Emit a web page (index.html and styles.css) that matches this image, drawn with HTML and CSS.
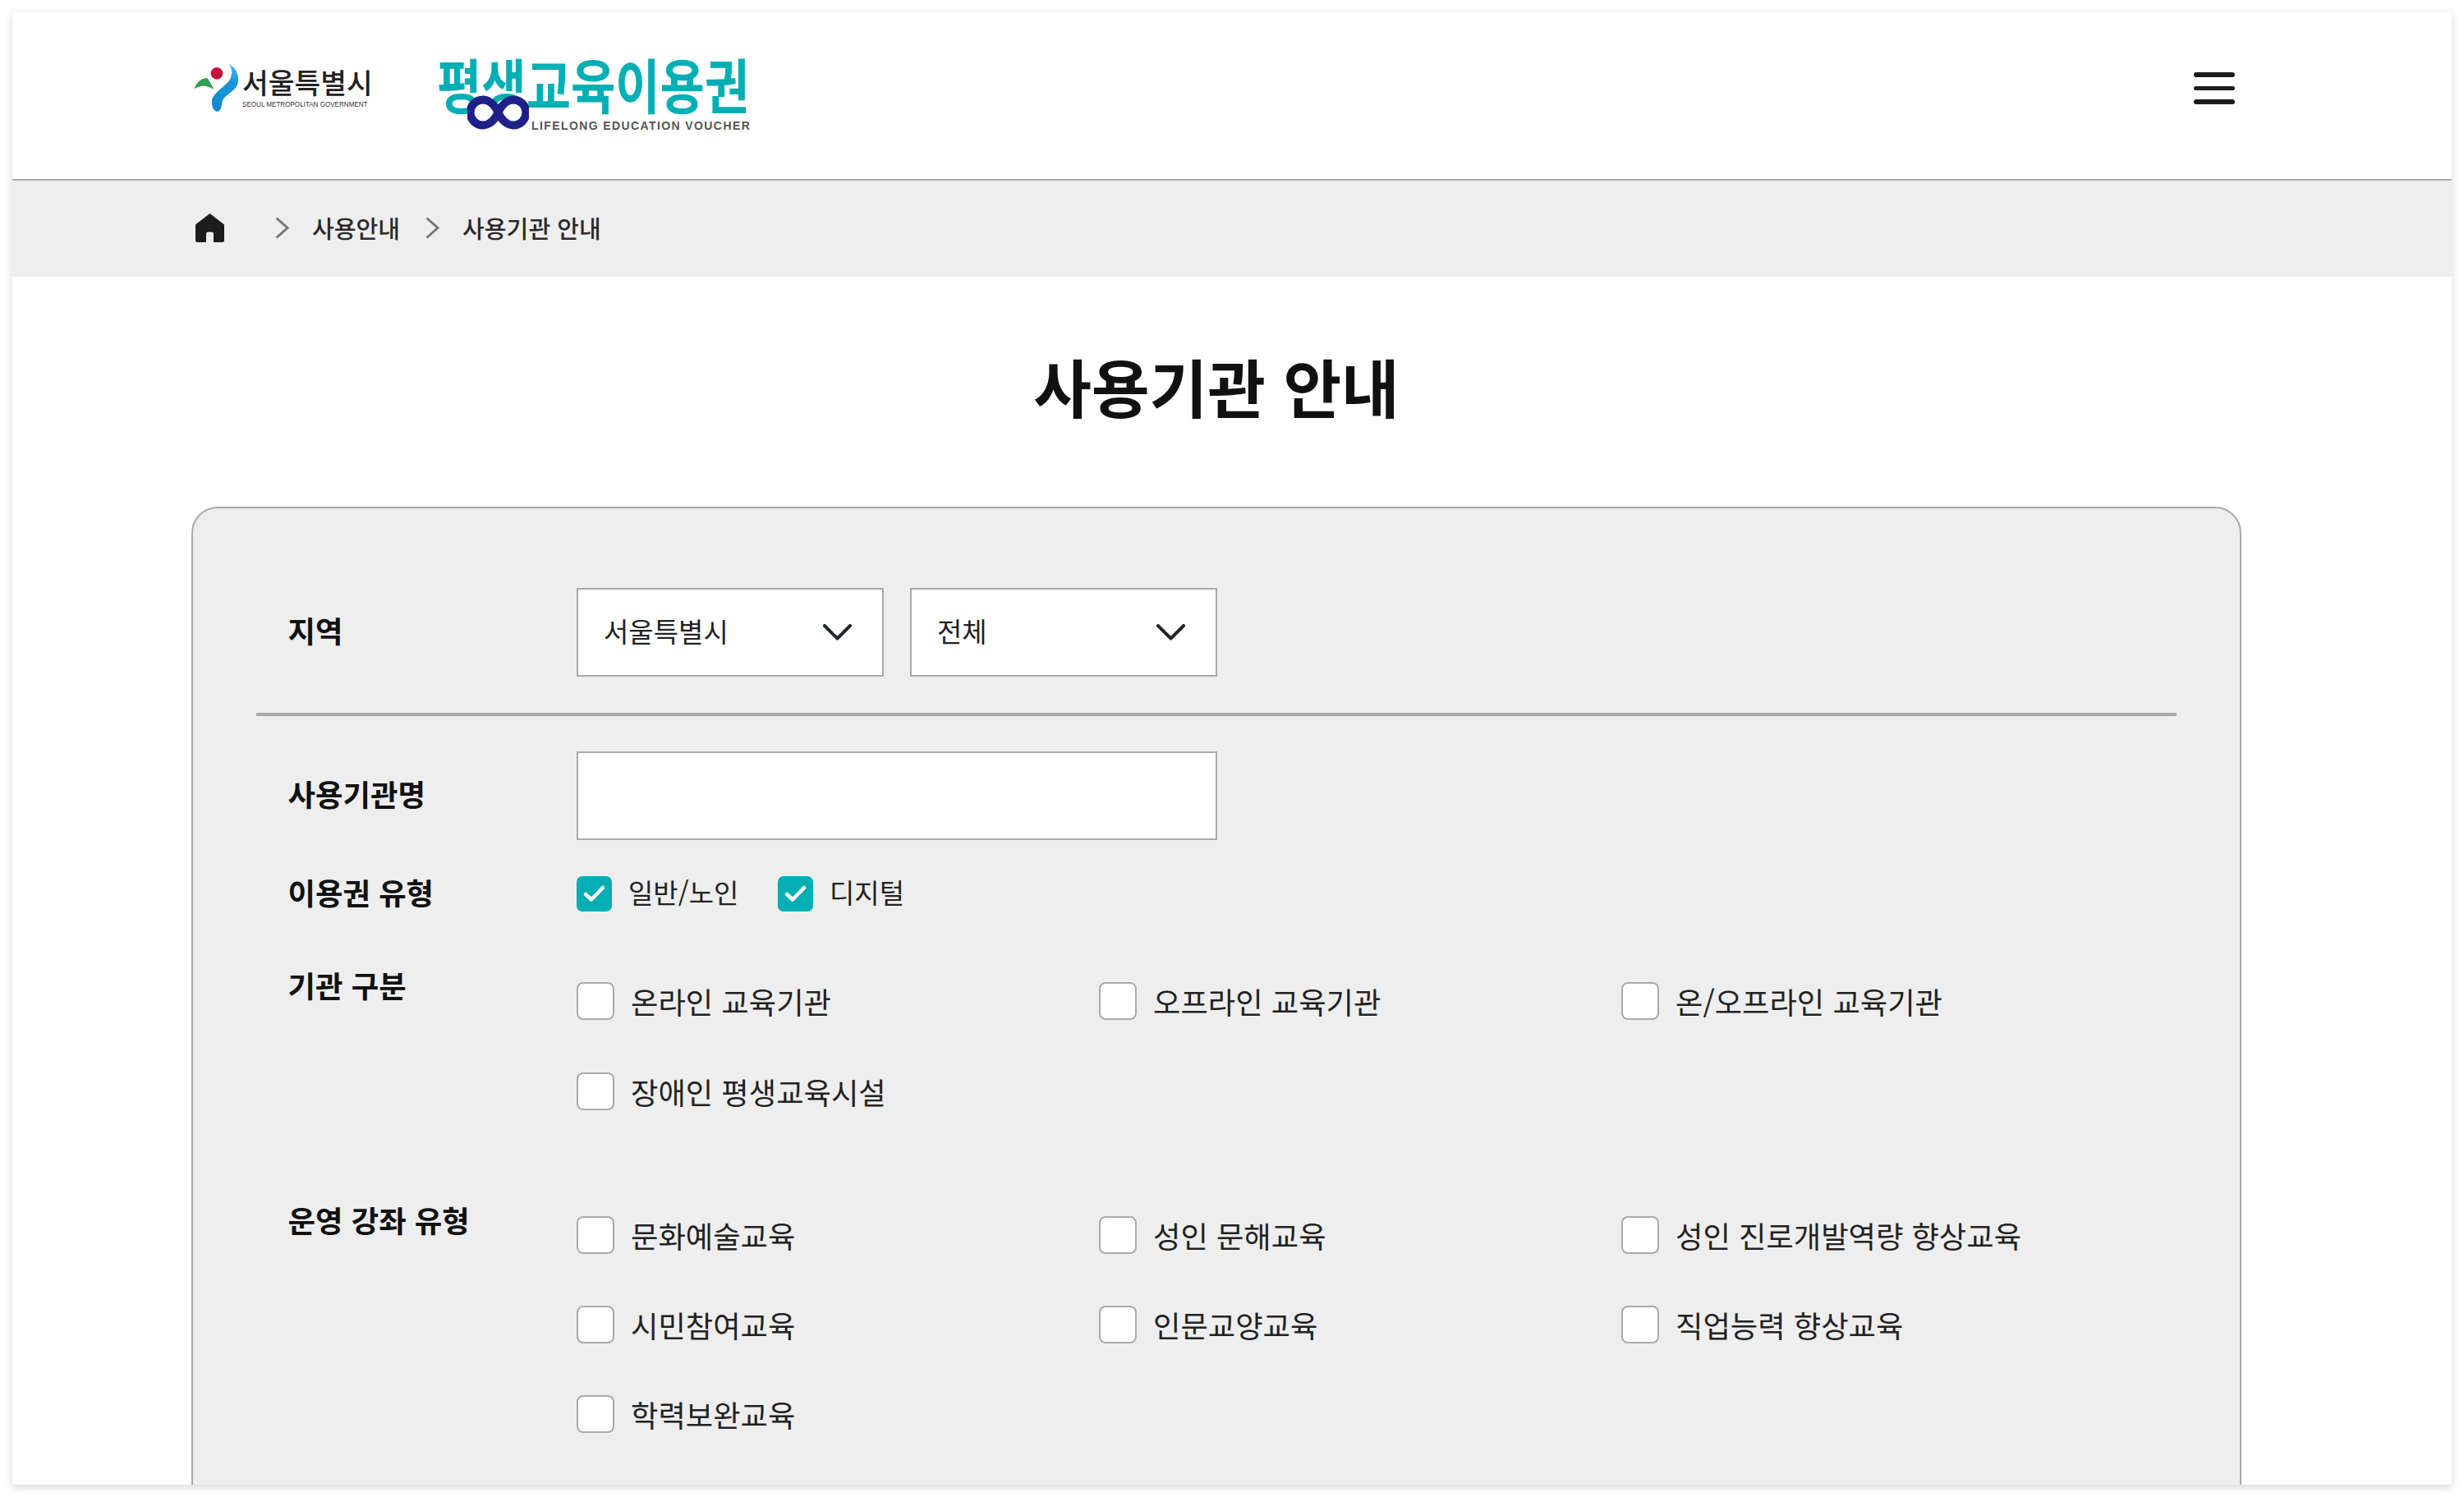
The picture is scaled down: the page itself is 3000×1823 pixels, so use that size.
FILE: index.html
```html
<!DOCTYPE html>
<html lang="ko">
<head>
<meta charset="utf-8">
<title>사용기관 안내</title>
<link rel="stylesheet" href="styles.css">
</head>
<body>
<div class="frame">
  <header class="header">
    <div class="seoul">
      <svg class="seoul-mark" viewBox="70 70 180 195" aria-hidden="true">
        <defs><linearGradient id="sw" x1="0" y1="0" x2="0" y2="1"><stop offset="0" stop-color="#5cb8e6"/><stop offset=".35" stop-color="#1b97dc"/><stop offset="1" stop-color="#0b88d0"/></linearGradient></defs>
        <circle cx="160" cy="113" r="22" fill="#c0143c"/>
        <path d="M78 170C85 145 105 130 125 130C135 145 145 160 148 172C125 155 100 155 78 170Z" fill="#2e9e4f"/>
        <path d="M205 80C232 92 245 125 235 155C225 180 190 190 180 215C175 235 178 245 165 252C150 255 140 235 142 212C146 185 185 165 205 140C217 122 218 100 205 80Z" fill="url(#sw)"/>
      </svg>
      <div class="seoul-text">
        <div class="seoul-name">서울특별시</div>
        <div class="seoul-sub">SEOUL METROPOLITAN GOVERNMENT</div>
      </div>
    </div>
    <div class="voucher">
      <div class="voucher-name">평생교육이용권</div>
      <svg class="voucher-inf" viewBox="0 0 75 42" aria-hidden="true">
        <path d="M37.5 21C33 11 26 5.500 19 5.500A15.500 15.500 0 0 0 19 36.500C26 36.500 33 31 37.500 21C42 11 49 5.500 56 5.500A15.500 15.500 0 0 1 56 36.500C49 36.500 42 31 37.500 21Z" fill="#fff" stroke="#1f2189" stroke-width="10"/>
      </svg>
      <div class="voucher-sub">LIFELONG EDUCATION VOUCHER</div>
    </div>
    <button class="burger" aria-label="메뉴"><span></span><span></span><span></span></button>
  </header>

  <nav class="crumbs">
    <svg class="home" viewBox="0 0 35 35" aria-hidden="true"><path d="M17.5 0L35 13.5V32.5A2.5 2.5 0 0 1 32.5 35H22V25A2.5 2.5 0 0 0 19.5 22.5H15.5A2.5 2.5 0 0 0 13 25V35H2.5A2.5 2.5 0 0 1 0 32.5V13.5Z" fill="#1c1c1c"/></svg>
    <svg class="crumb-sep first" viewBox="0 0 17 27" aria-hidden="true"><path d="M1.5 1.5L15 13.5L1.5 25.5" fill="none" stroke="#777" stroke-width="3"/></svg>
    <span class="crumb">사용안내</span>
    <svg class="crumb-sep" viewBox="0 0 17 27" aria-hidden="true"><path d="M1.5 1.5L15 13.5L1.5 25.5" fill="none" stroke="#777" stroke-width="3"/></svg>
    <span class="crumb">사용기관 안내</span>
  </nav>

  <main class="main">
    <h1 class="title">사용기관 안내</h1>
    <section class="panel">
      <div class="row region">
        <div class="label">지역</div>
        <div class="select first-select"><span>서울특별시</span><svg viewBox="0 0 35 20" aria-hidden="true"><path d="M2 2L17.5 17.5L33 2" fill="none" stroke="#212529" stroke-width="4" stroke-linecap="round" stroke-linejoin="round"/></svg></div>
        <div class="select"><span>전체</span><svg viewBox="0 0 35 20" aria-hidden="true"><path d="M2 2L17.5 17.5L33 2" fill="none" stroke="#212529" stroke-width="4" stroke-linecap="round" stroke-linejoin="round"/></svg></div>
      </div>
      <div class="row name-row">
        <div class="label">사용기관명</div>
        <div class="text-input"></div>
      </div>
      <div class="row type-row">
        <div class="label">이용권 유형</div>
        <div class="type-opt"><span class="checked"><svg viewBox="0 0 43 43" aria-hidden="true"><path d="M11 22L18 28.5L32 14" fill="none" stroke="#fff" stroke-width="4.5" stroke-linecap="round" stroke-linejoin="round"/></svg></span><span class="type-text">일반/노인</span></div>
        <div class="type-opt"><span class="checked"><svg viewBox="0 0 43 43" aria-hidden="true"><path d="M11 22L18 28.5L32 14" fill="none" stroke="#fff" stroke-width="4.5" stroke-linecap="round" stroke-linejoin="round"/></svg></span><span class="type-text">디지털</span></div>
      </div>
      <div class="row group group-a">
        <div class="label">기관 구분</div>
        <div class="options">
          <div class="opt"><span class="box"></span>온라인 교육기관</div>
          <div class="opt"><span class="box"></span>오프라인 교육기관</div>
          <div class="opt"><span class="box"></span>온/오프라인 교육기관</div>
          <div class="opt"><span class="box"></span>장애인 평생교육시설</div>
        </div>
      </div>
      <div class="row group group-b">
        <div class="label">운영 강좌 유형</div>
        <div class="options">
          <div class="opt"><span class="box"></span>문화예술교육</div>
          <div class="opt"><span class="box"></span>성인 문해교육</div>
          <div class="opt"><span class="box"></span>성인 진로개발역량 향상교육</div>
          <div class="opt"><span class="box"></span>시민참여교육</div>
          <div class="opt"><span class="box"></span>인문교양교육</div>
          <div class="opt"><span class="box"></span>직업능력 향상교육</div>
          <div class="opt"><span class="box"></span>학력보완교육</div>
        </div>
      </div>
    </section>
  </main>
</div>
</body>
</html>
```

FILE: styles.css
```css
* { box-sizing: border-box; }
html, body { margin: 0; padding: 0; background: #fff; }
body {
  width: 3000px;
  height: 1823px;
  padding: 15px;
  overflow: hidden;
  font-family: "Noto Sans CJK KR", "Noto Sans", sans-serif;
  color: #111;
}
.frame {
  width: 2970px;
  height: 1793px;
  background: #fff;
  overflow: hidden;
  box-shadow: 0 3px 10px rgba(0, 0, 0, .16);
}
.header {
  height: 205px;
  padding: 0 264px 18px 219px;
  display: flex;
  align-items: center;
  border-bottom: 2px solid #aaa;
}
.seoul { display: flex; align-items: flex-start; width: 298px; }
.seoul-mark { width: 60px; height: 65px; display: block; flex: none; }
.seoul-text { margin-left: 1px; padding-top: 5px; }
.seoul-name { font-size: 34.5px; line-height: 38px; font-weight: 500; color: #222; white-space: nowrap; }
.seoul-sub { font-family: "Liberation Sans", sans-serif; font-size: 9.5px; line-height: 10px; margin-top: 4px; color: #333; white-space: nowrap; transform: scaleX(.85); transform-origin: left center; }
.voucher { position: relative; width: 381px; height: 100px; }
.voucher-name { font-size: 72px; line-height: 86px; font-weight: 700; color: #03afb4; white-space: nowrap; transform: scaleX(.82); transform-origin: left center; }
.voucher-inf { position: absolute; left: 37px; top: 58px; width: 75px; height: 42px; }
.voucher-sub { position: absolute; left: 115px; top: 89px; font-family: "Liberation Sans", sans-serif; font-size: 14px; line-height: 12px; font-weight: 700; color: #555; letter-spacing: 1.4px; white-space: nowrap; }
.burger { margin-left: auto; width: 50px; padding: 0; border: 0; background: none; display: flex; flex-direction: column; gap: 11px; }
.burger span { display: block; height: 5.5px; border-radius: 3px; background: #1c1c1c; }

.crumbs {
  height: 117px;
  padding-left: 223px;
  padding-bottom: 3px;
  background: #eee;
  display: flex;
  align-items: center;
}
.home { width: 35px; height: 35px; flex: none; }
.crumb-sep { width: 17px; height: 27px; flex: none; margin: 0 28px 0 31px; }
.crumb-sep.first { margin-left: 62px; }
.crumb { font-size: 29.1px; line-height: 40px; color: #2a2a2a; font-weight: 500; white-space: nowrap; }

.main { padding: 0 256px 0 218px; }
.title { margin: 83px 0 97px; font-size: 76.8px; line-height: 100px; font-weight: 700; text-align: center; color: #111; }
.panel {
  background: #eee;
  border: 2px solid #aaa;
  border-radius: 32px;
  padding: 97px 77px 200px;
}
.row { display: flex; }
.label { width: 390px; flex: none; padding-left: 38.5px; margin-top: -6px; font-size: 36.4px; font-weight: 700; line-height: 46px; color: #111; white-space: nowrap; }
.region { align-items: center; padding-bottom: 44px; border-bottom: 4px solid #aaa; }
.select {
  width: 374px;
  height: 108px;
  background: #fff;
  border: 2px solid #aaa;
  padding: 0 37px 0 31px;
  display: flex;
  align-items: center;
  justify-content: space-between;
  font-size: 33px;
  color: #222;
}
.select span { margin-bottom: 5px; }
.select svg { width: 35px; height: 20px; flex: none; }
.first-select { margin-right: 32px; }
.name-row { align-items: center; margin-top: 43px; }
.text-input { width: 780px; height: 108px; background: #fff; border: 2px solid #aaa; }
.type-row { align-items: center; margin-top: 44px; height: 43px; }
.type-opt { display: flex; align-items: center; width: 245px; font-size: 33px; color: #222; white-space: nowrap; }
.type-text { margin-bottom: 5px; }
.checked { width: 43px; height: 43px; border-radius: 7px; background: #03afb4; margin-right: 20px; flex: none; }
.checked svg { display: block; width: 43px; height: 43px; }
.group-a { margin-top: 68px; }
.group-b { margin-top: 110px; }
.group-a .label { margin-top: -2px; }
.group-b .label { margin-top: 0; }
.group-a .options { padding-top: 18px; row-gap: 64px; }
.group-b .options { padding-top: 19px; row-gap: 63px; }
.options { display: grid; grid-template-columns: repeat(3, 636px); }
.opt { display: flex; align-items: center; height: 46px; font-size: 36.3px; color: #222; white-space: nowrap; }
.box { width: 46px; height: 46px; border-radius: 8px; background: #fff; border: 2px solid #aaa; margin-right: 20px; flex: none; }
```
